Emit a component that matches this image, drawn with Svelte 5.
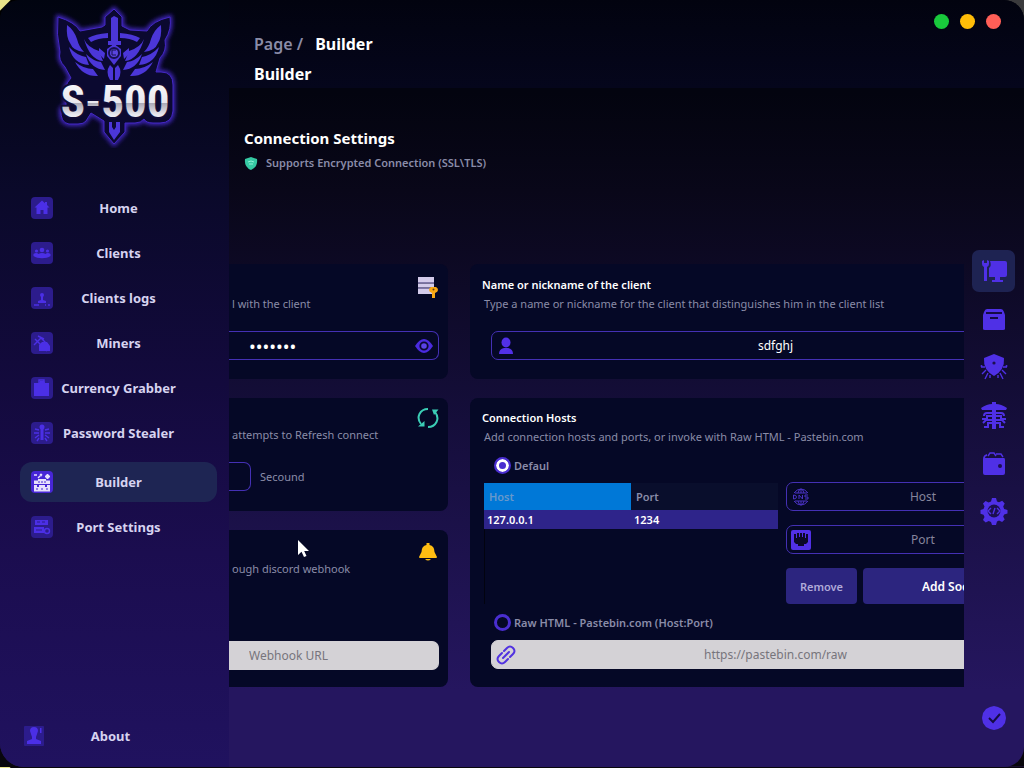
<script>
  const navItems = [
    { label: 'Home', icon: 'home' },
    { label: 'Clients', icon: 'clients' },
    { label: 'Clients logs', icon: 'logs' },
    { label: 'Miners', icon: 'miners' },
    { label: 'Currency Grabber', icon: 'bag' },
    { label: 'Password Stealer', icon: 'bug' },
    { label: 'Builder', icon: 'toolbox' },
    { label: 'Port Settings', icon: 'port' }
  ]

  const railItems = [
    { label: 'Connection', icon: 'monitor' },
    { label: 'Package', icon: 'box' },
    { label: 'Protection', icon: 'shield' },
    { label: 'Stealer', icon: 'circuit' },
    { label: 'Wallet', icon: 'wallet' },
    { label: 'Build options', icon: 'gear' }
  ]

  let page = $state('Builder')
  let tab = $state('monitor')
  let source = $state('default')
  let password = $state('1234567')
  let nickname = $state('sdfghj')
  let interval = $state('')
  let webhook = $state('')
  let rawUrl = $state('')
  let newHost = $state('')
  let newPort = $state('')
  let showPassword = $state(false)
  let hosts = $state([{ host: '127.0.0.1', port: '1234' }])

  function addSocket() {
    if (!newHost || !newPort) return
    hosts.push({ host: newHost, port: newPort })
    newHost = ''
    newPort = ''
  }

  function removeSocket() {
    hosts.pop()
  }
</script>

{#snippet navIcon(name)}
  <svg class="nav-icon" viewBox="0 0 22 22" aria-hidden="true">
    <rect class="tile" x="0" y="0" width="22" height="22" rx="4" />
    {#if name === 'home'}
      <path d="M11 3.5 3.5 10.5h2V17h4v-4h3v4h4v-6.5h2L16 8V5h-2v1.3z" />
    {:else if name === 'clients'}
      <circle cx="11" cy="8" r="2.3" />
      <circle cx="5.5" cy="9" r="1.6" />
      <circle cx="16.5" cy="9" r="1.6" />
      <path d="M2.5 12c2-1.5 4-1 5 0 2-1.2 5-1.2 7 0 1-1 3-1.5 5 0v2c-4 3-13 3-17 0z" />
    {:else if name === 'logs'}
      <circle cx="11" cy="8" r="2" />
      <path d="M10 9h2v4l3 1v2H7v-2l3-1z" />
      <path class="line" d="M3 18h5M14 18h1M17 18h2" />
    {:else if name === 'miners'}
      <path class="line" d="m3 13 7-7 7 7M7 4l6 3M4 7l12 12" />
      <path d="M8 19v-6l3-3h5l3 4v5H8z" />
    {:else if name === 'bag'}
      <path d="M3 6h5l1-2h4l1 2h4v13H3z" />
      <path class="line" d="M8 7V3h5v4" />
    {:else if name === 'bug'}
      <circle cx="11" cy="5" r="2.5" />
      <path d="M9.5 6h3v12h-3z" />
      <path class="line" d="m8 8-4-1M8 11H3M8 13l-4 3M8 16l-2 3M14 8l4-1M14 11h5M14 13l4 3M14 16l2 3" />
    {:else if name === 'toolbox'}
      <path d="M3 9.5h4V8h8v1.5h4V13H3zM3 14h3v2h2v-2h6v2h2v-2h3v6.5H3z" />
      <path class="line" d="M3 4h3M7 7l4-4M9 3l2 2M14 5.5h5M16.5 3v5M15 4l3 3M18 4l-3 3" />
      <path class="rivet" d="M8 10v2M11 10v2M14 10v2M5 18h2M10 18h2M15 18h2" />
    {:else}
      <path d="M4 4h13v5H4zM3 11h10v6H3z" />
      <circle class="line" cx="16" cy="15" r="2.5" />
      <path class="gap" d="M6 6h3M11 6h3M5 14h6" />
    {/if}
  </svg>
{/snippet}

{#snippet railIcon(name)}
  <svg class="rail-icon" viewBox="0 0 28 28" aria-hidden="true">
    {#if name === 'monitor'}
      <path d="M10 4h15q2 0 2 2v12q0 2-2 2H9v-9q3-2 1-7zM15 20h5v3h3v2H12v-2h3z" />
      <path d="M2 4v3q0 2 2 3v14h3V10q2-1 2-3V4L7 3v3H4V3z" />
    {:else if name === 'box'}
      <path d="M7 4h14q2 0 3 3l1 3v14q0 1-2 1H5q-2 0-2-1V10l1-3q1-3 3-3z" />
      <path class="cut" d="M6 8h16M10 13h8" />
    {:else if name === 'shield'}
      <path d="m14 1 10 4q1 12-10 18Q3 17 4 5z" />
      <path class="line" d="M5 14H1M6 17l-4 4M8 20l-3 6M10 22v3M23 14h4M22 17l4 4M20 20l3 6M18 22v3" />
      <circle class="hole" cx="14" cy="10" r="1.6" />
      <circle cx="1.5" cy="13" r="1" />
      <circle cx="26.5" cy="13" r="1" />
    {:else if name === 'circuit'}
      <path d="M1 7q6-4 11-4V1h4v2q5 0 11 4l-1 2H2zM12 8h4v20h-4z" />
      <path class="line thick" d="M12 12H7q-3 0-3 3M12 15H7v3H2M12 19H6l-3 3M12 22H8v4H4M16 12h5q3 0 3 3M16 15h5v3h5M16 19h6l3 3M16 22h4v4h4" />
    {:else if name === 'wallet'}
      <path d="M5 9h19q1 0 1 2v13q0 2-2 2H5q-2 0-2-2V10q0-4 4-5v2q-2 0-2 2z" />
      <path class="line" d="m8 7 2-3h4l2 3M16 5h5l2 3" />
      <circle class="hole" cx="20" cy="17" r="2" />
    {:else if name === 'gear'}
      <path d="M12 1h4l1 3.500 2 .8 3.200-1.500 2.500 2.700-1.500 3 1 2.500 3.300 1v3.500l-3.300 1-1 2 1.500 3-2.600 2.600-3.100-1.500-2 1-1 3.400h-4l-1-3-2.300-1-3 1.600-2.700-2.600 1.500-3-1-2.200-3-1V13l3-1 1-2.400L3 6.500 5.600 4l3 1.500L11 4.500z" />
      <circle class="hole" cx="14" cy="14" r="6.5" />
      <path class="line" d="m11 11-3 3 3 3M17 11l3 3-3 3M15 11l-2 6" />
    {/if}
  </svg>
{/snippet}

<div class="window">
  <aside class="sidebar">
    <svg class="logo" viewBox="0 0 130 148" role="img" aria-label="S-500">
      <defs>
        <linearGradient id="steel" x1="0" y1="0" x2="0" y2="1">
          <stop offset="0" stop-color="#ffffff" />
          <stop offset=".52" stop-color="#e8e7ee" />
          <stop offset=".53" stop-color="#aaa8b5" />
          <stop offset=".75" stop-color="#e9e8ef" />
          <stop offset="1" stop-color="#ffffff" />
        </linearGradient>
        <filter id="glow" x="-20%" y="-20%" width="140%" height="140%">
          <feGaussianBlur stdDeviation="2" />
        </filter>
      </defs>
      {#each ['url(#glow)', 'none'] as filter}
        <path
          class="crest"
          class:halo={filter !== 'none'}
          {filter}
          d="m64 9 8 8v9l8 4 17 1q5-10 23-14 2 12-5 23 2 11-5 18l-4 14h5q12 0 12 13v26q-1 12-13 12h-7q-7 0-9-4-3 4-9 4H75v9l-11 12-10-12v-11l-13-8-5 8q-2 3-8 3h-9q-9-1-8-15l5-4v-7q-3-12 5-20l-6-11q-7-7-5-15Q6 34 8 17q17 5 22 14l22-4 3-2v-8z"
        />
      {/each}
      <g class="wings">
        <path d="m61 18 3-2 4 2v23h3v4h-5v5h-4v-5h-4v-4h3z" />
        <path d="M38 38q7-4 20-5v5q-10 0-17 4zM90 38q-7-4-20-5v5q10 0 17 4z" />
        <path d="M17 25q7 5 10 14 2 8 7 13-11-1-14-9-4-6-3-18zM111 25q-7 5-10 14-2 8-7 13 11-1 14-9 4-6 3-18zM19 47q7 8 17 10l3 8q-16-1-20-18zM109 47q-7 8-17 10l-3 8q16-1 20-18z" />
        <path d="M34 39q3 8 15 12l4 10q-13-1-19-22zM94 39q-3 8-15 12l-4 10q13-1 19-22zM25 62q9 7 18 7l5 7q-15 1-23-14zM103 62q-9 7-18 7l-5 7q15 1 23-14zM36 54q7 7 15 8l4 8q-14-1-19-16zM92 54q-7 7-15 8l-4 8q14-1 19-16z" />
        <path d="M49 48l6 5-1 6-5-5zM79 48l-6 5 1 6 5-5z" />
        <path d="m64 44 7 5v7l-7 9-7-9v-7z" />
        <path d="M60 65q-5 7 0 15h3V68zM68 65q5 7 0 15h-3V68zM59 122h3v5l2 3 2-3v-5h4v10l-6 8-5-8z" />
      </g>
      <circle class="eye" cx="64" cy="53" r="5" />
      <path class="eye-mark" d="M66 50h-4v5h4" />
      <text x="65" y="117" text-anchor="middle">S-500</text>
    </svg>

    <nav>
      {#each navItems as item (item.label)}
        <button
          type="button"
          class="nav-item"
          class:active={page === item.label}
          onclick={() => (page = item.label)}
        >
          {@render navIcon(item.icon)}
          <span>{item.label}</span>
        </button>
      {/each}
    </nav>

    <button type="button" class="nav-item about" onclick={() => (page = 'About')}>
      <svg class="nav-icon" viewBox="0 0 22 22" aria-hidden="true">
        <rect class="tile" x="1" y="1" width="20" height="20" rx="1" />
        <path d="M7 6q0-4 4-4t4 4l-2 6v2l5 2v3H4v-3l5-2v-2zM17 3h1.500v5H17z" />
      </svg>
      <span>About</span>
    </button>
  </aside>

  <div class="main">
    <header>
      <div class="title">
        <p class="crumbs"><span>Page /</span> <b>Builder</b></p>
        <h1>Builder</h1>
      </div>
      <div class="dots">
        <button type="button" class="green" aria-label="Minimize"></button>
        <button type="button" class="yellow" aria-label="Maximize"></button>
        <button type="button" class="red" aria-label="Close"></button>
      </div>
    </header>

    <div class="body">
      <main>
        <section class="intro">
          <h2>Connection Settings</h2>
          <p>
            <svg viewBox="0 0 14 15" aria-hidden="true">
              <path fill="#35c9a3" d="m7 1 6 2q1 8-6 11-7-3-6-11z" />
              <path fill="none" stroke="#8ff0d7" d="M4 6q3-2 6 0M5 8h4" />
            </svg>
            Supports Encrypted Connection (SSL\TLS)
          </p>
        </section>

        <div class="columns">
          <div class="col left">
            <section class="card password">
              <div class="card-top">
                <p>l with the client</p>
                <svg class="badge" viewBox="0 0 22 22" aria-hidden="true">
                  <path fill="#d3cbea" d="M1 1h16v5H1zM1 7.500h16v4H1zM1 13h16v5H1z" />
                  <path fill="#8078a8" d="M1 6h16v1.500H1zM1 11.500h12V13H1z" />
                  <path fill="#f9a914" d="M14 11h5q2 1 2 3t-3 3v5h-3v-5q-3-1-3-3 0-2 2-3z" />
                  <circle cx="16.5" cy="13.5" r="1" fill="#62400e" />
                </svg>
              </div>
              <div class="field">
                <input
                  type={showPassword ? 'text' : 'password'}
                  bind:value={password}
                  aria-label="Connection password"
                />
                <button type="button" aria-label="Show password" onclick={() => (showPassword = !showPassword)}>
                  <svg viewBox="0 0 20 20" aria-hidden="true">
                    <path fill="#4a2be0" d="M1 10q9-14 18 0-9 14-18 0z" />
                    <circle cx="10" cy="10" r="3.7" fill="#5a43e8" stroke="#0a0930" stroke-width="1.8" />
                  </svg>
                </button>
              </div>
            </section>

            <section class="card refresh">
              <div class="card-top">
                <p>attempts to Refresh connect</p>
                <svg class="badge" viewBox="0 0 22 22" aria-hidden="true">
                  <path fill="none" stroke="#3bcdb5" stroke-width="2" d="M4 17Q0 12 2.500 7 5 2 11 2M18 5q4 5 1.500 10Q17 20 11 20" />
                  <path fill="#3bcdb5" d="M15 2.500h6.500L17 8zM1 19.500h6.500V14z" />
                </svg>
              </div>
              <div class="interval">
                <input id="interval" type="text" bind:value={interval} />
                <label for="interval">Secound</label>
              </div>
            </section>

            <section class="card webhook">
              <div class="card-top">
                <p>ough discord webhook</p>
                <svg class="badge" viewBox="0 0 22 22" aria-hidden="true">
                  <path fill="#ffbd12" d="M9.500 4V2h3v2q5 1 5 7l2.500 5q0 1-1 1H3q-1 0-1-1l2.500-5q0-6 5-7zM8 18h6q-3 3-6 0z" />
                </svg>
              </div>
              <div class="field light">
                <input type="text" placeholder="Webhook URL" bind:value={webhook} aria-label="Webhook URL" />
              </div>
            </section>
          </div>

          <div class="col right">
            <section class="card nick">
              <h3><label for="nickname">Name or nickname of the client</label></h3>
              <p>Type a name or nickname for the client that distinguishes him in the client list</p>
              <div class="field">
                <svg viewBox="0 0 20 20" aria-hidden="true">
                  <ellipse cx="10" cy="6.5" rx="4.5" ry="5" fill="#5230e8" />
                  <path fill="#5230e8" d="M3 18q0-5 5-6h4q5 1 5 6z" />
                </svg>
                <input id="nickname" type="text" bind:value={nickname} />
              </div>
            </section>

            <section class="card hosts">
              <h3>Connection Hosts</h3>
              <p>Add connection hosts and ports, or invoke with Raw HTML - Pastebin.com</p>
              <label class="radio">
                <input type="radio" name="source" value="default" bind:group={source} />
                Defaul
              </label>

              <div class="sockets">
                <div class="table-box">
                  <table>
                    <thead>
                      <tr><th>Host</th><th>Port</th></tr>
                    </thead>
                    <tbody>
                      {#each hosts as row}
                        <tr><td>{row.host}</td><td>{row.port}</td></tr>
                      {/each}
                    </tbody>
                  </table>
                </div>

                <div class="socket-form">
                  <div class="field">
                    <svg viewBox="0 0 20 20" aria-hidden="true">
                      <path fill="none" stroke="#4a32c4" d="M3 6q3-4 7-4t7 4M3 14q3 4 7 4t7-4M7 6q1-4 3-4t3 4M7 14q1 4 3 4t3-4M10 2v4M10 14v4M4 6h12M4 14h12M2.500 12V8q3 0 3 2t-3 2M8 12V8l3.500 4V8M17 8h-3v2h3v2h-3" />
                    </svg>
                    <input type="text" placeholder="Host" bind:value={newHost} aria-label="Host" />
                  </div>
                  <div class="field">
                    <svg viewBox="0 0 20 20" aria-hidden="true">
                      <rect width="20" height="20" rx="2" fill="#5130e6" />
                      <path fill="#0b0828" d="M3 4h2v4h1V3h2v4h1V3h2v4h1V3h2v5h1V4h2v8l-2 2h-2v2H7v-2H5l-2-2z" />
                    </svg>
                    <input type="text" placeholder="Port" bind:value={newPort} aria-label="Port" />
                  </div>
                  <div class="actions">
                    <button type="button" class="remove" onclick={removeSocket}>Remove</button>
                    <button type="button" class="add" onclick={addSocket}>Add Socket</button>
                  </div>
                </div>
              </div>

              <label class="radio">
                <input type="radio" name="source" value="raw" bind:group={source} />
                Raw HTML - Pastebin.com (Host:Port)
              </label>
              <div class="field light">
                <svg viewBox="0 0 20 20" aria-hidden="true">
                  <g fill="none" stroke="#5132e0" stroke-width="2" stroke-linecap="round">
                    <path d="m7 13 6-6M8 6l3-3q3-3 6 0t0 6l-3 3M12 14l-3 3q-3 3-6 0t0-6l3-3" />
                  </g>
                </svg>
                <input type="text" placeholder="https://pastebin.com/raw" bind:value={rawUrl} aria-label="Raw URL" />
              </div>
            </section>
          </div>
        </div>
      </main>

      <div class="rail">
        {#each railItems as item (item.icon)}
          <button
            type="button"
            class:selected={tab === item.icon}
            aria-label={item.label}
            onclick={() => (tab = item.icon)}
          >
            {@render railIcon(item.icon)}
          </button>
        {/each}
        <button type="button" class="confirm" aria-label="Build">
          <svg class="rail-icon" viewBox="0 0 28 28" aria-hidden="true">
            <path d="m14 2 4 1 4 2 3 4 1 5-1 5-3 4-4 2-4 1-4-1-4-2-3-4-1-5 1-5 3-4 4-2z" />
            <path class="cut" d="m9 14 4 4 7-8" />
          </svg>
        </button>
      </div>
    </div>
  </div>

  <svg class="pointer" viewBox="0 0 12 19" aria-hidden="true">
    <path d="M1 1v15l3.500-3.300L7 18l2.500-1-2.300-5H12z" />
  </svg>
</div>

<style>
  :global(body) {
    margin: 0;
    background:
      linear-gradient(135deg, #e9e48a 7px, transparent 8px),
      linear-gradient(
        to right,
        #08060c 48px,
        #8c6a93 48px 336px,
        #1a1030 336px 391px,
        #b8659a 391px 431px,
        #1a1030 431px 440px,
        #b8659a 440px 480px,
        #1a1030 480px 635px,
        #b8659a 635px 676px,
        #1a1030 676px 685px,
        #b8659a 685px 725px,
        #1a1030 725px 734px,
        #b8659a 734px 774px,
        #c06030 778px 827px,
        #1a1030 827px
      ) bottom / 100% 1px no-repeat,
      linear-gradient(to right, #000 50%, #3a3a3c 50%) top / 100% 40px no-repeat,
      #08060c;
  }

  * {
    box-sizing: border-box;
  }

  .window {
    position: relative;
    display: flex;
    min-height: calc(100vh - 1px);
    overflow: hidden;
    border-radius: 20px 20px 20px 24px;
    font-family: 'Noto Sans', 'Open Sans', sans-serif;
    font-size: 11px;
    color: #8a8ca8;
    background: linear-gradient(#03040f 12%, #090719 25%, #150e3b 55%, #25165f 90%);
  }

  h1,
  h2,
  h3,
  p {
    margin: 0;
  }

  button,
  input {
    font: inherit;
    color: inherit;
  }

  button {
    padding: 0;
    border: none;
    background: none;
    cursor: pointer;
  }

  .sidebar {
    flex: none;
    display: flex;
    flex-direction: column;
    width: 229px;
    background: linear-gradient(#010410, #0a092a 25%, #130a3d 50%, #1b0d4f 72%, #20125f);
  }

  .logo {
    width: 130px;
    height: 148px;
    margin-left: 50px;
  }

  .crest {
    fill: #0b0930;
    stroke: #4328c4;
    stroke-width: 1;
  }

  .crest.halo {
    stroke-width: 4;
  }

  .wings {
    fill: #4b36d8;
  }

  .eye {
    fill: #5a45e0;
    stroke: #16104e;
    stroke-width: 2;
  }

  .eye-mark {
    fill: none;
    stroke: #16104e;
  }

  .logo text {
    font-family: 'Liberation Sans Narrow', 'Roboto Condensed', 'Liberation Sans', sans-serif;
    font-size: 45px;
    font-weight: 700;
    fill: url(#steel);
    stroke: #100b35;
    stroke-width: 4;
    paint-order: stroke;
  }

  nav {
    display: flex;
    flex-direction: column;
    gap: 5px;
    margin-top: 40px;
  }

  .nav-item {
    display: grid;
    grid-template-columns: 22px 1fr 22px;
    align-items: center;
    height: 40px;
    margin: 0 12px 0 20px;
    padding: 0 11px;
    border-radius: 12px;
    font-size: 13px;
    font-weight: 700;
    color: #d6d3f0;
    white-space: nowrap;
  }

  .nav-item span {
    display: flex;
    justify-content: center;
  }

  .nav-item.active {
    margin-top: 4px;
    background: #1e2553;
  }

  .nav-item.about {
    margin: auto 20px 11px 12px;
  }

  .nav-icon {
    width: 22px;
    height: 22px;
    fill: #4b2fe6;
  }

  .nav-icon .tile {
    fill: #2c1c8c;
  }

  .nav-icon .line {
    fill: none;
    stroke: #4b2fe6;
    stroke-width: 1.4;
  }

  .nav-icon .rivet {
    stroke: #4726d6;
  }

  .nav-icon .gap {
    stroke: #2c1c8c;
  }

  .active .nav-icon {
    fill: #e6e0fb;
  }

  .active .nav-icon .tile {
    fill: #4726d6;
  }

  .active .nav-icon .line {
    stroke: #e6e0fb;
  }

  .main {
    flex: 1;
    display: flex;
    flex-direction: column;
    min-width: 0;
  }

  header {
    display: flex;
    justify-content: space-between;
    height: 88px;
    padding: 14px 23px 0 25px;
    background: linear-gradient(#02030f, #05061c);
    font-size: 16px;
    line-height: 30px;
  }

  header h1,
  header b {
    font-size: 16px;
    font-weight: 700;
    color: #fff;
  }

  .title {
    padding-top: 15px;
  }

  .crumbs {
    display: flex;
    gap: 12px;
    font-weight: 600;
  }

  .dots {
    display: flex;
    gap: 11px;
  }

  .dots button {
    width: 15px;
    height: 15px;
    border-radius: 50%;
  }

  .green {
    background: #19c93c;
  }

  .yellow {
    background: #ffbd08;
  }

  .red {
    background: #ff5f57;
  }

  .body {
    flex: 1;
    display: flex;
    min-height: 0;
  }

  main {
    flex: 1;
    min-width: 0;
  }

  .intro {
    height: 176px;
    padding: 38px 15px 0;
  }

  h2 {
    font-size: 15px;
    line-height: 24px;
    font-weight: 700;
    color: #fff;
  }

  .intro p {
    display: flex;
    align-items: center;
    gap: 8px;
    line-height: 26px;
    font-weight: 600;
  }

  .intro svg {
    width: 14px;
    height: 15px;
  }

  .columns {
    display: grid;
    grid-template-columns: 219px minmax(0, 1fr);
    gap: 22px;
  }

  .col {
    display: flex;
    flex-direction: column;
    gap: 19px;
    overflow: hidden;
    white-space: nowrap;
  }

  .card {
    background: #050826;
  }

  .left .card {
    border-radius: 0 8px 8px 0;
    padding: 12px 9px 0 0;
  }

  .left .refresh {
    padding-top: 9px;
  }

  .left .webhook {
    padding-top: 11px;
  }

  /* right cards run on underneath the icon rail */
  .right .card {
    margin-right: -106px;
    padding: 10px 12px 0;
    border-radius: 8px 0 0 8px;
  }

  .right .nick {
    padding-top: 11px;
  }

  .password,
  .nick {
    height: 115px;
  }

  .refresh {
    height: 113px;
  }

  .webhook {
    height: 157px;
  }

  .card-top {
    display: flex;
    justify-content: space-between;
    height: 55px;
    padding-left: 3px;
  }

  .card-top p {
    margin-top: 16px;
    line-height: 24px;
  }

  .badge {
    width: 22px;
    height: 22px;
  }

  .field {
    display: flex;
    align-items: center;
    gap: 4px;
    height: 29px;
    padding: 0 4px;
    border: 1px solid #4430b4;
    border-radius: 7px;
    color: #fff;
  }

  .left .field {
    padding-left: 0;
    border-left: none;
    border-radius: 0 7px 7px 0;
  }

  .field svg {
    flex: none;
    display: block;
    width: 20px;
    height: 20px;
  }

  .field input {
    flex: 1;
    min-width: 0;
    width: 100%;
    border: none;
    outline: none;
    background: none;
    font-size: 12px;
    text-align: center;
  }

  .left .field input {
    padding-left: 20px;
    text-align: left;
  }

  .left .field input[type='password'] {
    font-size: 18px;
  }

  .right .field input {
    padding-right: 24px;
  }

  .field input::placeholder {
    color: #85859c;
    opacity: 1;
  }

  .light {
    border-color: #d4d2d6;
    background: #d4d2d6;
    color: #333;
  }

  .light input::placeholder {
    color: #77757c;
  }

  .webhook .field {
    margin-top: 45px;
  }

  .interval {
    display: flex;
    align-items: center;
    gap: 9px;
  }

  .interval input {
    width: 22px;
    height: 29px;
    padding: 0;
    border: 1px solid #4430b4;
    border-left: none;
    border-radius: 0 7px 7px 0;
    background: none;
  }

  h3 {
    font-size: 11px;
    line-height: 20px;
    font-weight: 600;
    color: #fff;
  }

  .card h3 + p {
    padding-left: 2px;
    line-height: 18px;
  }

  .nick .field {
    margin: 18px 0 0 9px;
  }

  .hosts {
    height: 289px;
  }

  .radio {
    display: flex;
    align-items: center;
    gap: 3px;
    height: 18px;
    margin: 10px 0 0 12px;
    font-weight: 600;
  }

  .radio input {
    appearance: none;
    width: 17px;
    height: 17px;
    margin: 0;
    border: 3px solid #4a2ed0;
    border-radius: 50%;
    background: #050826;
  }

  .radio input:checked {
    border: 2px solid #4a2ed0;
    background: #4a2ed0;
    box-shadow: inset 0 0 0 3px #fff;
  }

  .sockets {
    display: flex;
    gap: 8px;
    margin: 9px 0 0 2px;
  }

  .table-box {
    width: 294px;
    height: 121px;
    box-shadow: inset 1px 0 #02030f;
  }

  table {
    width: 100%;
    table-layout: fixed;
    border-collapse: collapse;
    text-align: left;
  }

  th {
    height: 27px;
    padding: 0 5px;
    font-weight: 600;
    background: #090e2c;
  }

  th:first-child {
    background: #0078d7;
    color: #6798cb;
  }

  td {
    height: 19px;
    padding: 0 3px;
    line-height: 17px;
    font-weight: 600;
    color: #fff;
    background: #2e248a;
  }

  .socket-form {
    flex: 1;
    display: flex;
    flex-direction: column;
    gap: 14px;
    margin-top: -1px;
  }

  .actions {
    display: flex;
    gap: 6px;
  }

  .actions button {
    height: 36px;
    border-radius: 4px;
    background: #2c257f;
    font-weight: 600;
  }

  .remove {
    width: 71px;
    color: #b0aad8;
  }

  .actions .add {
    flex: 1;
    padding-right: 12px;
    font-size: 12px;
    color: #fff;
  }

  .sockets + .radio {
    margin-top: 9px;
  }

  .hosts > .field {
    margin: 9px 0 0 9px;
  }

  .rail {
    flex: none;
    display: flex;
    flex-direction: column;
    align-items: center;
    gap: 6px;
    width: 60px;
    padding: 162px 1px 28px 0;
  }

  .rail button {
    display: grid;
    place-items: center;
    width: 43px;
    height: 42px;
    border-radius: 7px;
  }

  .rail .selected {
    background: #1e2352;
  }

  .rail .confirm {
    margin-top: auto;
  }

  .rail-icon {
    width: 28px;
    height: 28px;
    fill: #4f30e6;
  }

  .rail-icon .line {
    fill: none;
    stroke: #4f30e6;
    stroke-width: 1.4;
  }

  .rail-icon .thick {
    stroke-width: 2;
  }

  .rail-icon .cut {
    fill: none;
    stroke: #150b45;
    stroke-width: 2;
  }

  .rail-icon .hole {
    fill: #1c1050;
  }

  .pointer {
    position: absolute;
    left: 297px;
    top: 539px;
    width: 12px;
    height: 19px;
    fill: #fff;
  }
</style>
